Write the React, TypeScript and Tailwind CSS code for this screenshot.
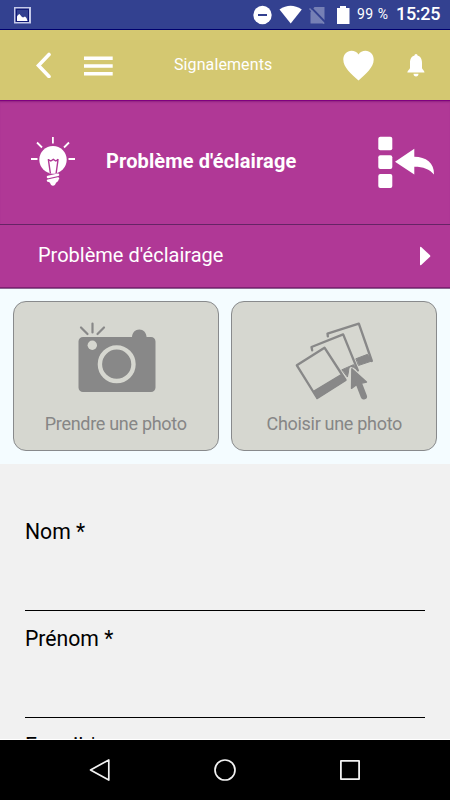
import React, { useState } from 'react';

const FIELDS = [
  { id: 'nom', label: 'Nom *' },
  { id: 'prenom', label: 'Prénom *' },
];

function StatusBar() {
  return (
    <div className="h-[30px] shrink-0 bg-[#334190] border-b border-[#00006e] flex items-center justify-between text-white pl-[14px] pr-[10px]">
      <svg className="mt-[2px] w-[18px] h-[18px]" viewBox="0 0 18 18">
        <path d="M0 0h17v16.500H0z" fill="#c5cae9" />
        <path d="M1.500 1.500h13.500v13.500H1.500z" fill="#111a77" />
        <path d="M3 3h11v11H3z" fill="#334190" />
        <path d="M3 14V9.500l1-1.500 1.500-1 2 2.500 1.500 1 2-1 1.500 1.500 1 3z" fill="#fff" />
      </svg>
      <div className="flex items-center">
        <svg className="w-[106px] h-[20px] mt-[1px]" viewBox="-1.500 0 106 20">
          <circle cx="10" cy="10" r="9.200" fill="#fff" />
          <path d="M5.500 10h9" stroke="#334190" strokeWidth="2" />
          <path d="M27 4.500Q38-3 49.300 4.500L38.200 18.500z" fill="#fff" />
          <path d="M62 2h10v16.500H58V7z" fill="#7680b5" />
          <path d="M57.500 1.500L74.500 19" stroke="#334190" strokeWidth="2" />
          <path d="M57 3.500L71.500 18.500" stroke="#7680b5" strokeWidth="1.400" />
          <path d="M84.500 3h3V1h6v2h3.500v16H84.500z" fill="#fff" />
        </svg>
        <span className="w-[31px] pb-[2px] text-[14px] leading-[26px] tracking-[0.500px] whitespace-nowrap">99 %</span>
        <span className="ml-[8px] w-[44px] pb-[1px] text-[18px] leading-[26px] tracking-[-0.300px] font-medium">15:25</span>
      </div>
    </div>
  );
}

function Header() {
  return (
    <header className="h-[70px] shrink-0 bg-[#d4c871] flex items-center text-white">
      <button className="ml-[35px]" aria-label="Retour">
        <svg className="w-[17px] h-[26px]" viewBox="0 0 17 26" fill="none" stroke="#fff" strokeWidth="3.600" strokeLinecap="round" strokeLinejoin="miter">
          <path d="M14 2.500L3.500 13.500 14 24.500" />
        </svg>
      </button>
      <button className="ml-[32px]" aria-label="Menu">
        <svg className="w-[29px] h-[22px]" viewBox="0 0 29 22" fill="#fff">
          <path d="M0 2.500h28.700v3.500H0zM0 10.200h28.700v3.500H0zM0 18h28.700v3.500H0z" />
        </svg>
      </button>
      <h1 className="ml-[61px] w-[99px] text-[16px] tracking-[0.100px] whitespace-nowrap">Signalements</h1>
      <svg className="ml-[70px] w-[31px] h-[31px]" viewBox="0 0 31 31" fill="#fff">
        <path d="M15.500 30.500C8 23.500.3 17.500.3 9.500.3 4.500 4 .7 8.500.7c3 0 5.500 1.200 7 3.700 1.500-2.500 4-3.700 7-3.700 4.500 0 8.200 3.800 8.200 8.800 0 8-7.700 14-15.200 21z" />
      </svg>
      <svg className="ml-[33px] w-[18px] h-[23px]" viewBox="0 0 18 23" fill="#fff">
        <path d="M9 0c1 0 1.500.8 1.500 1.600C13.800 2.500 15 5.500 15 9v5c0 1.500 2.500 2.500 2.500 4.500H.3C.3 16.500 3 15.500 3 14V9c0-3.500 1.200-6.500 4.500-7.400C7.500.8 8 0 9 0z" />
        <path d="M6.500 19.800h5c0 1.800-1 2.700-2.500 2.700s-2.500-.9-2.500-2.700z" />
      </svg>
    </header>
  );
}

function BulbIcon() {
  return (
    <svg className="w-[46px] h-[50px]" viewBox="0 0 46 50">
      <g stroke="#fff" strokeWidth="1.800">
        <path d="M22.900 0v6.500M7 5.500l5 5M39 5.500l-5 5M1 22h6.500M38.500 22H45" />
      </g>
      <circle cx="23" cy="22.800" r="13.700" fill="#fff" />
      <path d="M18.500 33h9.300l-.8 3.500h-7.600z" fill="#fff" />
      <g fill="none" stroke="#b03896" strokeWidth="1.400">
        <path d="M20.400 36.500L18.300 22.200M26.100 36.500l2-14.300M18.300 22.500l2.500 1.500 2.500-1.700 2.500 1.700 2.500-1.700" />
      </g>
      <path d="M18 40l10-2.200M18 43.600l10-2.200" stroke="#fff" strokeWidth="2.500" strokeLinecap="round" />
      <path d="M17.500 44.300l11-2.500c.3 2.300-1 3-2.500 4-.6 2-1.600 3-3 3s-2.500-1-3-3z" fill="#fff" />
    </svg>
  );
}

function CategoryHeader() {
  return (
    <section className="h-[125px] shrink-0 bg-[#b03896] border-t border-t-[#80007f] border-b border-b-[#662465] flex items-center text-white shadow-[inset_0_2px_2px_-1px_#8f2380]">
      <div className="ml-[30px] mb-[1px]">
        <BulbIcon />
      </div>
      <h2 className="ml-[30px] w-[240px] pb-[4px] text-[20px] leading-[28px] font-bold tracking-[0.120px] whitespace-nowrap">Problème d'éclairage</h2>
      <svg className="ml-[31px] mb-[1px] w-[59px] h-[54px]" viewBox="0 0 59 54" fill="#fff">
        <rect x="1.300" y="1.700" width="14" height="13.500" rx="2" />
        <rect x="1.300" y="20.300" width="14" height="13.700" rx="2" />
        <rect x="1.300" y="39" width="14" height="14" rx="2" />
        <path d="M18 26.800L37.300 13.800v7.900C49 22 57.300 27.500 57 39.500 52.500 34.200 46.500 31.700 37.300 31.700v7.700z" />
      </svg>
    </section>
  );
}

function CameraIcon() {
  return (
    <svg className="w-[78px] h-[71px]" viewBox="0 0 78 71">
      <path d="M3 5.500l6.500 6.500M14.500 1.500v9M26 5.500L19.500 12" stroke="#888" strokeWidth="2.200" strokeLinecap="round" />
      <path d="M5 15h49c.3-4.500 3.200-7.500 7.300-7.500s7 3 7.300 7.500H73a4.500 4.500 0 014.500 4.500V65.500A4.500 4.500 0 0173 70H5a4.500 4.500 0 01-4.500-4.500v-46A4.500 4.500 0 015 15z" fill="#888" />
      <circle cx="14.300" cy="23.200" r="4.700" fill="#d6d7d0" />
      <circle cx="38.700" cy="42.200" r="16.800" fill="none" stroke="#d6d7d0" strokeWidth="4.400" />
    </svg>
  );
}

function GalleryIcon() {
  return (
    <svg className="w-[80px] h-[80px]" viewBox="30.500 35 240 240" strokeLinejoin="round" strokeLinecap="round">
      <g fill="none" stroke="#888" strokeWidth="7">
        <path d="M129 81l-1-8 94-30 39 112" />
        <path d="M82 123l-2-10 95-38 44 108" />
        <path d="M36 168L119 115 182 212 97 266z" />
      </g>
      <path d="M214 148l34-13 13 20-39 13z" fill="#888" stroke="#888" strokeWidth="3" />
      <path d="M172 181l34-15 13 17-14-10-12 4-5 25z" fill="#888" stroke="#888" strokeWidth="3" />
      <path d="M86 246l81-49 15 15-85 54z" fill="#888" stroke="#888" strokeWidth="4" />
      <path d="M199 238V178l43 40-13 4" fill="none" stroke="#d6d7d0" strokeWidth="10" />
      <path d="M201 178l44 40-17 4-14 5-14 10z" fill="#888" stroke="#888" strokeWidth="4" />
      <path d="M221 220l16 41" stroke="#888" strokeWidth="19" />
    </svg>
  );
}

interface PhotoButtonProps {
  label: string;
  icon: React.ReactNode;
}

function PhotoButton({ label, icon }: PhotoButtonProps) {
  return (
    <button className="flex-1 h-[150px] rounded-[13px] border border-[#888a8c] bg-[#d6d7d0] flex flex-col items-center text-[#868686]">
      <span className="h-[109px] flex items-end pl-[2px]">{icon}</span>
      <span className="text-[18px] leading-[26px] tracking-[-0.300px] whitespace-nowrap">{label}</span>
    </button>
  );
}

function NavBar() {
  return (
    <nav className="h-[61px] shrink-0 bg-black border-t border-white flex items-center justify-center gap-[103px]">
      <svg className="w-[22px] h-[24px]" viewBox="0 0 22 24" fill="none" stroke="#f2f2f2" strokeWidth="1.700" strokeLinejoin="round">
        <path d="M1.500 12L19.800 1.900v20.200z" />
      </svg>
      <svg className="w-[22px] h-[22px]" viewBox="0 0 22 22" fill="none" stroke="#f2f2f2" strokeWidth="1.700">
        <circle cx="11" cy="11" r="10" />
      </svg>
      <svg className="w-[22px] h-[22px]" viewBox="0 0 22 22" fill="none" stroke="#f2f2f2" strokeWidth="1.800" strokeLinejoin="round">
        <rect x="1.900" y="1.900" width="18.200" height="18.200" />
      </svg>
    </nav>
  );
}

export default function App() {
  const [values, setValues] = useState<Record<string, string>>({});

  return (
    <div className="w-[450px] h-[800px] overflow-hidden flex flex-col bg-[#f1f1f1] font-[Roboto,sans-serif]">
      <StatusBar />
      <Header />
      <CategoryHeader />

      <button className="h-[64px] shrink-0 bg-[#b03896] border-b border-[#8a6590] shadow-[inset_0_-1px_0_#802073] flex items-center justify-between pl-[38px] pr-[19px] text-white">
        <span className="pb-[4px] text-[20px] leading-[28px]">Problème d'éclairage</span>
        <svg className="mb-[1px] w-[12px] h-[20px]" viewBox="0 0 12 20" fill="#fff">
          <path d="M1 1.500Q1 .3 2.200 1L11 9.200q.7.800 0 1.600L2.200 19Q1 19.700 1 18.500z" />
        </svg>
      </button>

      <section className="h-[175px] shrink-0 bg-[#f4fcff] flex gap-[12.500px] pt-[12px] pl-[12.700px] pr-[12.700px]">
        <PhotoButton label="Prendre une photo" icon={<span className="mb-[18px]"><CameraIcon /></span>} />
        <PhotoButton label="Choisir une photo" icon={<span className="mb-[10px]"><GalleryIcon /></span>} />
      </section>

      <form className="flex-1 min-h-0 overflow-hidden px-[25px] pt-[54px] text-black">
        {FIELDS.map(field => (
          <div key={field.id} className="h-[107px] flex flex-col">
            <label htmlFor={field.id} className="text-[21.200px] leading-[28px]">{field.label}</label>
            <input
              id={field.id}
              value={values[field.id] || ''}
              onChange={e => setValues({ ...values, [field.id]: e.target.value })}
              className="w-full h-[65px] bg-transparent border-b border-black outline-none"
            />
          </div>
        ))}
        <label className="block text-[21.200px] leading-[28px]">E-mail *</label>
      </form>

      <NavBar />
    </div>
  );
}
